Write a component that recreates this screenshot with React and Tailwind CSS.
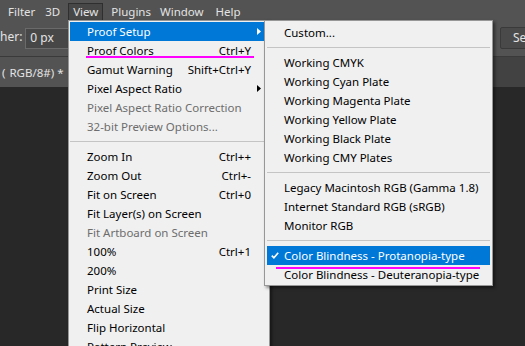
import React from 'react';

const viewItems = [
  { label: 'Proof Setup', arrow: true, active: true },
  { label: 'Proof Colors', shortcut: 'Ctrl+Y' },
  { label: 'Gamut Warning', shortcut: 'Shift+Ctrl+Y' },
  { label: 'Pixel Aspect Ratio', arrow: true },
  { label: 'Pixel Aspect Ratio Correction', disabled: true },
  { label: '32-bit Preview Options...', disabled: true },
  'sep',
  { label: 'Zoom In', shortcut: 'Ctrl++' },
  { label: 'Zoom Out', shortcut: 'Ctrl+-' },
  { label: 'Fit on Screen', shortcut: 'Ctrl+0' },
  { label: 'Fit Layer(s) on Screen' },
  { label: 'Fit Artboard on Screen', disabled: true },
  { label: '100%', shortcut: 'Ctrl+1' },
  { label: '200%' },
  { label: 'Print Size' },
  { label: 'Actual Size' },
  { label: 'Flip Horizontal' },
  { label: 'Pattern Preview' },
];

const proofItems = [
  { label: 'Custom...' },
  'sep',
  { label: 'Working CMYK' },
  { label: 'Working Cyan Plate' },
  { label: 'Working Magenta Plate' },
  { label: 'Working Yellow Plate' },
  { label: 'Working Black Plate' },
  { label: 'Working CMY Plates' },
  'sep',
  { label: 'Legacy Macintosh RGB (Gamma 1.8)' },
  { label: 'Internet Standard RGB (sRGB)' },
  { label: 'Monitor RGB' },
  'sep',
  { label: 'Color Blindness - Protanopia-type', active: true, checked: true },
  { label: 'Color Blindness - Deuteranopia-type' },
];

const Arrow = ({ white }) => (
  <svg width="4" height="7" viewBox="0 0 4 7">
    <path d="M0 0L4 3.5L0 7Z" fill={white ? '#ffffff' : '#000000'} />
  </svg>
);

const Check = () => (
  <svg width="8" height="7" viewBox="0 0 8 7">
    <path d="M0.8 3.6L2.9 5.8L7.2 0.8" fill="none" stroke="#ffffff" strokeWidth="1.6" />
  </svg>
);

const Separator = () => (
  <div className="h-[11px] flex items-center">
    <div className="h-px w-full bg-[#c4c4c4]" />
  </div>
);

const ViewRow = ({ item }) => (
  <div className={`h-[19px] flex items-center pl-[17px] whitespace-nowrap ${item.active ? 'bg-[#0078d7] text-white' : item.disabled ? 'text-[#6d6d6d]' : 'text-black'}`}>
    <span>{item.label}</span>
    <span className="ml-auto">{item.shortcut}</span>
    <span className="w-[17px] h-full flex items-center pl-[6px]">{item.arrow && <Arrow white={item.active} />}</span>
  </div>
);

const ProofRow = ({ item }) => (
  <div className={`h-[19px] flex items-center whitespace-nowrap ${item.active ? 'bg-[#0078d7] text-white' : 'text-black'}`}>
    <span className="w-[17px] h-full flex items-center pl-[4px]">{item.checked && <Check />}</span>
    <span>{item.label}</span>
  </div>
);

export default function App() {
  return (
    <div className="relative w-[525px] h-[346px] overflow-hidden bg-[#282828] font-['Noto_Sans',sans-serif] text-[11.5px] leading-none">
      {/* menu bar */}
      <div className="h-[20px] bg-[#535353] flex items-end pl-[2px] text-[#e3e3e3] text-[11.5px]">
        <div className="h-[17px] pl-[6px] pr-[5px] flex items-center">Filter</div>
        <div className="h-[17px] px-[5px] flex items-center">3D</div>
        <div className="h-[17px] w-[35px] ml-[3px] justify-center flex items-center bg-[#474747] border border-b-0 border-[#2f2f2f]">View</div>
        <div className="h-[17px] pl-[6px] pr-[4px] flex items-center ml-[2px]">Plugins</div>
        <div className="h-[17px] pl-[5px] pr-[6px] flex items-center">Window</div>
        <div className="h-[17px] px-[6px] flex items-center">Help</div>
      </div>

      {/* options bar */}
      <div className="h-[37px] bg-[#535353] border-b border-[#3a3a3a] flex items-center text-[#e3e3e3] text-[12px]">
        <span className="pb-[2px]">her:</span>
        <div className="ml-[3px] w-[50px] h-[21px] bg-[#474747] border border-[#6a6a6a] flex items-center pl-[4px]">0 px</div>
        <div className="flex-1" />
        <div className="w-[60px] -mr-[35px] h-[22px] rounded-[2px] bg-[#4a4a4a] border border-[#3a3a3a] flex items-center pl-[12px] whitespace-nowrap overflow-hidden">Select and Mask...</div>
      </div>

      {/* document tabs */}
      <div className="h-[30px] bg-[#424242] flex">
        <div className="w-[68px] bg-[#535353] flex items-center pl-[2px] pt-[2px] text-[#e3e3e3] whitespace-nowrap overflow-hidden">
          <span>(</span>
          <span className="ml-[4px]">RGB/8#) *</span>
          <span className="ml-[4px] text-[#8a8a8a]">×</span>
        </div>
      </div>

      {/* View menu */}
      <div className="absolute left-[68px] top-[20px] w-[202px] h-[340px] bg-[#f0f0f0] border border-[#979797] p-[1px] shadow-[2px_2px_3px_rgba(0,0,0,0.45)]">
        {viewItems.map((item, i) => (item === 'sep' ? <Separator key={i} /> : <ViewRow key={i} item={item} />))}
      </div>

      {/* Proof Setup submenu */}
      <div className="absolute left-[264px] top-[20px] w-[229px] bg-[#f0f0f0] border border-[#979797] px-[2px] pt-[2px] pb-[1px] shadow-[2px_2px_3px_rgba(0,0,0,0.45)]">
        {proofItems.map((item, i) => (item === 'sep' ? <Separator key={i} /> : <ProofRow key={i} item={item} />))}
      </div>

      {/* annotation underlines */}
      <div className="absolute left-[86px] top-[56px] w-[168px] h-[2px] bg-[#ff00ff]" />
      <div className="absolute left-[276px] top-[267px] w-[204px] h-[2px] bg-[#ff00ff]" />
    </div>
  );
}
